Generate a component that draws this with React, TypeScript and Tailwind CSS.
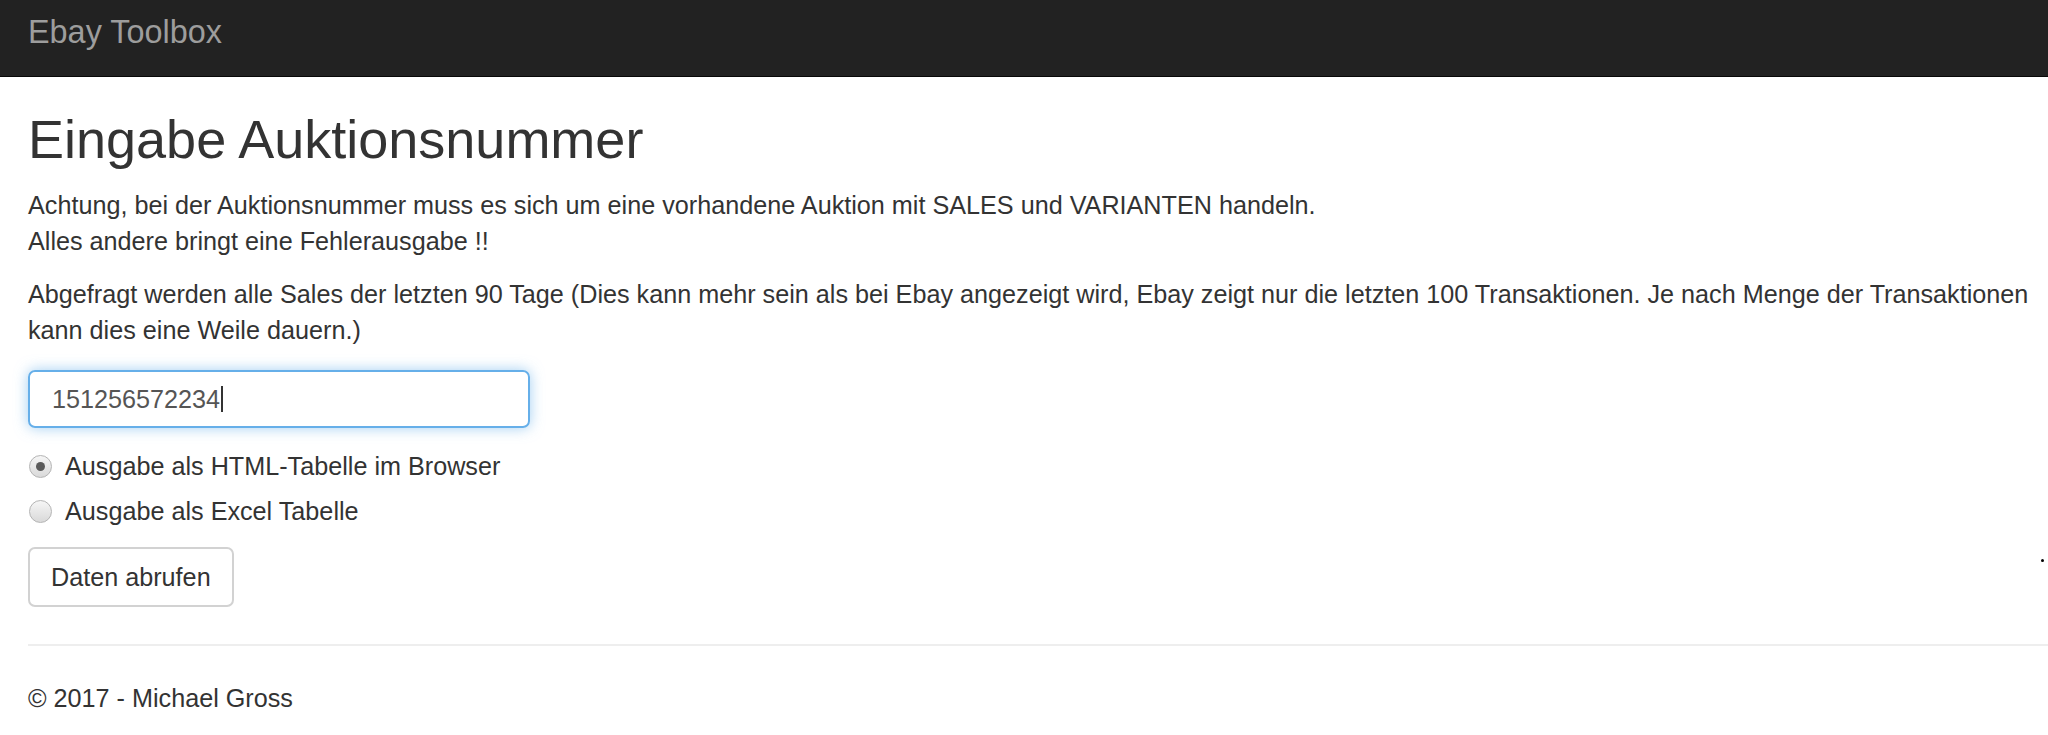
import { useState } from 'react';

function Radio({ checked, label, onClick }: { checked: boolean; label: string; onClick: () => void }) {
  return (
    <label className="flex items-center h-[36px] cursor-pointer" onClick={onClick}>
      <span className="ml-[1px] w-[23px] h-[23px] rounded-full border border-[#b4b4b4] bg-gradient-to-b from-[#f6f6f6] to-[#d9d9d9] flex items-center justify-center">
        {checked && <span className="w-[9px] h-[9px] rounded-full bg-[#5a5a5a]" />}
      </span>
      <span className="ml-[13px]">{label}</span>
    </label>
  );
}

function App() {
  const [mode, setMode] = useState('html');
  const [auction] = useState('151256572234');

  return (
    <div className="min-h-screen bg-white text-[#333] font-['Liberation_Sans',Arial,sans-serif]">
      <nav className="h-[77px] bg-[#222] border-b border-[#080808] pl-[28px] pt-[14px]">
        <a href="#" className="text-[32.4px] leading-[36px] text-[#9d9d9d]">Ebay Toolbox</a>
      </nav>

      <div className="pl-[28px] pr-[4px]">
        <h2 className="mt-[33px] mb-[18px] text-[54px] leading-[59px] font-normal">Eingabe Auktionsnummer</h2>
        <p className="text-[25.2px] leading-[36px] mb-[17px]">
          Achtung, bei der Auktionsnummer muss es sich um eine vorhandene Auktion mit SALES und VARIANTEN handeln.
          <br />
          Alles andere bringt eine Fehlerausgabe !!
        </p>
        <p className="text-[25.2px] leading-[36px] mb-[22px]">
          Abgefragt werden alle Sales der letzten 90 Tage (Dies kann mehr sein als bei Ebay angezeigt wird, Ebay zeigt nur die letzten 100 Transaktionen. Je nach Menge der Transaktionen kann dies eine Weile dauern.)
        </p>

        <form className="text-[25.2px] leading-[36px]">
          {/* focused input with caret */}
          <div className="w-[502px] h-[58px] rounded-[7px] border-2 border-[#66afe9] shadow-[0_0_14px_rgba(102,175,233,0.6)] flex items-center pl-[22px] text-[#555]">
            <span>{auction}</span>
            <span className="w-[2px] h-[26px] bg-[#333] ml-[1px]" />
          </div>

          <div className="mt-[20px]">
            <Radio checked={mode === 'html'} label="Ausgabe als HTML-Tabelle im Browser" onClick={() => setMode('html')} />
          </div>
          <div className="mt-[9px]">
            <Radio checked={mode === 'excel'} label="Ausgabe als Excel Tabelle" onClick={() => setMode('excel')} />
          </div>

          <div className="mt-[18px] flex items-start justify-between">
            <button type="button" className="h-[60px] px-[21px] rounded-[7px] border-2 border-[#d2d2d2] bg-white text-[#333]">
              Daten abrufen
            </button>
            <span className="mt-[12px] w-[3px] h-[3px] rounded-full bg-black" />
          </div>
        </form>

        <hr className="mt-[37px] -mr-[4px] border-t-2 border-[#eee]" />

        <footer className="mt-[34px] text-[25.2px] leading-[36px]">
          <p>© 2017 - Michael Gross</p>
        </footer>
      </div>
    </div>
  );
}

export default App;
